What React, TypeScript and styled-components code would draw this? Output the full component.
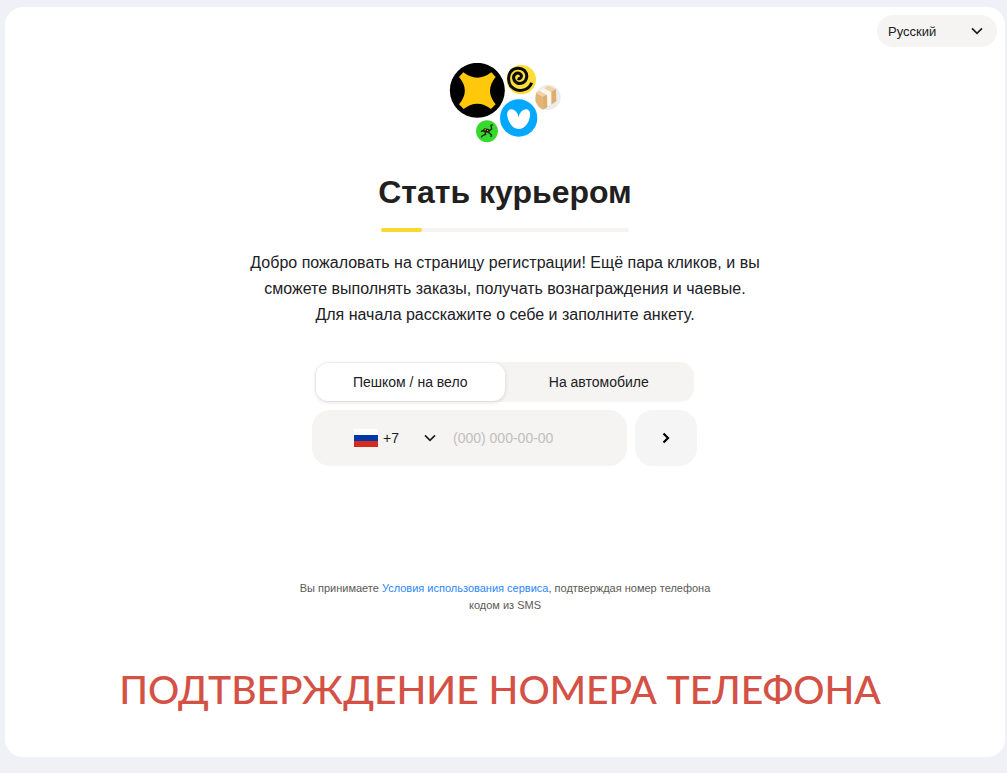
import React from "react";
import styled, { createGlobalStyle } from "styled-components";

const GlobalStyle = createGlobalStyle`
  * { box-sizing: border-box; }
  body {
    margin: 0;
    background: #f0f1f6;
    color: #21201f;
    font-family: "Liberation Sans", Arial, sans-serif;
  }
  button, input, select { font: inherit; color: inherit; }
`;

const Page = styled.div`
  min-height: 100vh;
  padding: 7px 2px 16px 5px;
  display: flex;
`;

const Card = styled.div`
  flex: 1;
  min-width: 0;
  display: flex;
  flex-direction: column;
  align-items: center;
  padding: 8px 8px 32px;
  border-radius: 18px;
  background: #fff;
`;

const TopBar = styled.header`
  align-self: stretch;
  display: flex;
  justify-content: flex-end;
`;

const SelectBox = styled.div<{ $width: number }>`
  position: relative;
  width: ${(p) => p.$width}px;
  display: flex;
  align-items: center;
`;

const Select = styled.select<{ $pill?: boolean }>`
  appearance: none;
  width: 100%;
  height: 32px;
  border: 0;
  padding: ${(p) => (p.$pill ? "0 32px 0 11px" : "0 24px 0 5px")};
  border-radius: 16px;
  background: ${(p) => (p.$pill ? "#f5f4f2" : "transparent")};
  font-size: ${(p) => (p.$pill ? 13 : 14)}px;
`;

const SelectArrow = styled.svg<{ $right: number }>`
  position: absolute;
  right: ${(p) => p.$right}px;
  width: 12px;
  height: 8px;
  pointer-events: none;
`;

const Main = styled.main`
  flex: 1;
  width: 100%;
  display: flex;
  flex-direction: column;
  align-items: center;
  padding-top: 16px;
`;

const Logo = styled.svg`
  width: 112px;
  height: 80px;
`;

const Title = styled.h1`
  margin: 29px 0 0;
  font-size: 32px;
  line-height: 40px;
  font-weight: 700;
`;

const Progress = styled.div`
  width: 248px;
  max-width: 100%;
  height: 4px;
  margin-top: 16px;
  border-radius: 2px;
  background: #f5f4f2;
`;

const ProgressFill = styled.div`
  width: 41px;
  height: 100%;
  border-radius: 2px;
  background: #f8d930;
`;

const Intro = styled.p`
  max-width: 520px;
  margin: 18px 0 0;
  font-size: 16px;
  line-height: 26px;
  text-align: center;
`;

const Form = styled.form`
  width: 386px;
  max-width: 100%;
  margin-top: 34px;
  padding-right: 1px;
  display: flex;
  flex-direction: column;
  gap: 8px;
`;

const Tabs = styled.div`
  display: flex;
  height: 40px;
  margin: 0 3px;
  padding: 1px;
  border-radius: 14px;
  background: #f5f4f2;
`;

const Tab = styled.button<{ $active?: boolean }>`
  flex: 1;
  border: 0;
  border-radius: 12px;
  background: ${(p) => (p.$active ? "#fff" : "transparent")};
  box-shadow: ${(p) => (p.$active ? "0 1px 4px rgba(0, 0, 0, 0.14)" : "none")};
  font-size: 14px;
`;

const PhoneRow = styled.div`
  display: flex;
  gap: 8px;
  height: 56px;
`;

const PhoneField = styled.div`
  flex: 1;
  min-width: 0;
  display: flex;
  align-items: center;
  padding: 0 16px 0 42px;
  border-radius: 18px;
  background: #f5f4f2;
`;

const Flag = styled.svg`
  flex: none;
  width: 24px;
  height: 18px;
`;

const PhoneInput = styled.input`
  flex: 1;
  min-width: 0;
  height: 32px;
  margin-left: 14px;
  padding: 0;
  border: 0;
  outline: 0;
  background: transparent;
  font-size: 14px;
  &::placeholder { color: #c0bfbd; }
`;

const Submit = styled.button`
  width: 62px;
  display: flex;
  align-items: center;
  justify-content: center;
  border: 0;
  border-radius: 18px;
  background: #f5f5f5;
`;

const Legal = styled.p`
  max-width: 420px;
  margin: 114px 0 0;
  color: #5c5a57;
  font-size: 11px;
  line-height: 17px;
  text-align: center;
`;

const LegalLink = styled.a`
  color: #2a86ff;
  text-decoration: none;
`;

const Caption = styled.h2`
  margin: 47px 0 0;
  padding-right: 10px;
  color: #d35245;
  font-family: Lato, "Noto Sans", sans-serif;
  font-size: 39px;
  line-height: 56px;
  font-weight: 500;
  text-align: center;
`;

function Arrow({ right }: { right: number }) {
  return (
    <SelectArrow $right={right} viewBox="0 0 12 8" fill="none" aria-hidden="true">
      <path d="M1 1.3L6 6.3L11 1.3" stroke="#21201f" strokeWidth="1.7" />
    </SelectArrow>
  );
}

function ServicesLogo() {
  return (
    <Logo viewBox="27 24 336 240" fill="none" role="img" aria-label="Сервисы доставки">
      <circle cx="112" cy="106" r="82.5" fill="#000" />
      <path
        d="M70 52Q112 84 154 52L167 66Q133 107 167 148L153 162Q112 130 71 162L57 148Q92 107 57 66Z"
        fill="#ffc80a"
      />
      <circle cx="244" cy="74" r="44" fill="#fbdc38" />
      <path
        d="M233 70C243 75 248 61 240 56C230 50 219 60 221 70C223 84 238 89 249 83C262 76 264 58 254 47C242 36 222 38 212 50C203 62 204 82 213 94C233 115 266 107 275 83"
        stroke="#0b0b06"
        strokeWidth="9"
      />
      <circle cx="324" cy="127" r="38" fill="#ececec" />
      <path d="M288 113L308 125L310 164C298 160 288 148 286 134Z" fill="#e2b577" />
      <path d="M288 113L325 92L348 102L308 125Z" fill="#f2d2a2" />
      <path d="M308 125L348 102L349 139L310 164Z" fill="#dcae70" />
      <path d="M298 107L311 99L334 112V149L322 156L321 120Z" fill="#fbf6ef" />
      <circle cx="236" cy="189" r="56" fill="#00a9ff" />
      <path
        d="M236 188C238 174 247 163 258 163C268 163 272 172 270 184C267 205 253 222 237 222C220 222 206 205 202 184C200 172 204 163 214 163C225 163 234 174 236 188Z"
        fill="#fff"
      />
      <circle cx="141" cy="229" r="33" fill="#38d92f" />
      <path d="M127 227L133 220L147 222L151 229L142 233L131 231Z" fill="#14200e" />
      <path d="M133 225L138 224M141 226L145 228" stroke="#f5a623" strokeWidth="3" />
      <path
        d="M147 228L155 222L153 211L158 209M129 226L123 230M135 231L137 238L127 242L124 247M144 231L154 239L153 246"
        stroke="#14200e"
        strokeWidth="4"
      />
    </Logo>
  );
}

export default function App() {
  return (
    <>
      <GlobalStyle />
      <Page>
        <Card>
          <TopBar>
            <SelectBox $width={120}>
              <Select $pill aria-label="Язык" defaultValue="ru">
                <option value="ru">Русский</option>
              </Select>
              <Arrow right={14} />
            </SelectBox>
          </TopBar>
          <Main>
            <ServicesLogo />
            <Title>Стать курьером</Title>
            <Progress role="progressbar" aria-label="Заполнение анкеты">
              <ProgressFill />
            </Progress>
            <Intro>
              Добро пожаловать на страницу регистрации! Ещё пара кликов, и вы
              сможете выполнять заказы, получать вознаграждения и чаевые.
              <br />
              Для начала расскажите о себе и заполните анкету.
            </Intro>
            <Form onSubmit={(e) => e.preventDefault()}>
              <Tabs role="tablist">
                <Tab type="button" role="tab" aria-selected="true" $active>
                  Пешком / на вело
                </Tab>
                <Tab type="button" role="tab" aria-selected="false">
                  На автомобиле
                </Tab>
              </Tabs>
              <PhoneRow>
                <PhoneField>
                  <Flag viewBox="0 0 24 18" aria-hidden="true">
                    <path d="M0 0H24V6H0Z" fill="#fff" />
                    <path d="M0 6H24V12H0Z" fill="#0039a6" />
                    <path d="M0 12H24V18H0Z" fill="#d52b1e" />
                  </Flag>
                  <SelectBox $width={61}>
                    <Select aria-label="Код страны" defaultValue="7">
                      <option value="7">+7</option>
                    </Select>
                    <Arrow right={3} />
                  </SelectBox>
                  <PhoneInput type="tel" aria-label="Номер телефона" placeholder="(000) 000-00-00" />
                </PhoneField>
                <Submit type="submit" aria-label="Далее">
                  <svg width="8" height="12" viewBox="0 0 8 12" fill="none" aria-hidden="true">
                    <path d="M1.5 1.5L6 6L1.5 10.5" stroke="#000" strokeWidth="2.2" />
                  </svg>
                </Submit>
              </PhoneRow>
            </Form>
            <Legal>
              Вы принимаете <LegalLink href="#terms">Условия использования сервиса</LegalLink>,
              подтверждая номер телефона кодом из SMS
            </Legal>
            <Caption>ПОДТВЕРЖДЕНИЕ НОМЕРА ТЕЛЕФОНА</Caption>
          </Main>
        </Card>
      </Page>
    </>
  );
}
